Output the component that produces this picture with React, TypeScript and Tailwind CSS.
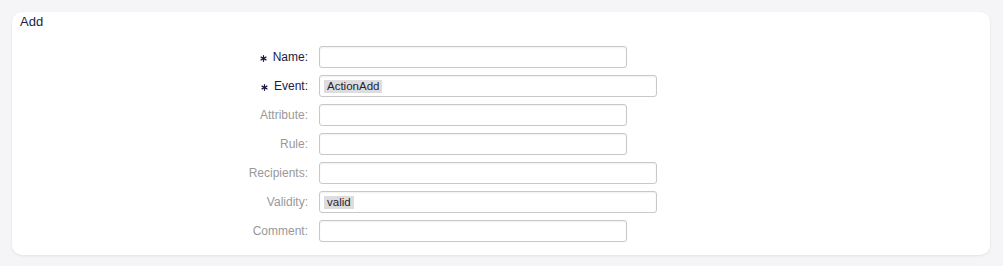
import React from "react";

type Row = { label: string; required?: boolean; long?: boolean; chip?: string };

const rows: Row[] = [
  { label: "Name:", required: true },
  { label: "Event:", required: true, long: true, chip: "ActionAdd" },
  { label: "Attribute:" },
  { label: "Rule:" },
  { label: "Recipients:", long: true },
  { label: "Validity:", long: true, chip: "valid" },
  { label: "Comment:" },
];

function Asterisk() {
  return (
    <svg width="7" height="7" viewBox="0 0 8 8" className="mr-[6px] mt-[2px]">
      <g stroke="#1b1b45" strokeWidth="1.4" strokeLinecap="round">
        <line x1="4" y1="0.8" x2="4" y2="7.2" />
        <line x1="1.2" y1="2.4" x2="6.8" y2="5.6" />
        <line x1="1.2" y1="5.6" x2="6.8" y2="2.4" />
      </g>
    </svg>
  );
}

export default function App() {
  return (
    <div
      className="h-[266px] w-[1003px] bg-[#f5f5f7] pt-[10px] pl-[12px] pr-[13px]"
      style={{ fontFamily: '"Liberation Sans", Arial, sans-serif' }}
    >
      <div className="rounded-[10px] bg-white shadow-[0_1px_3px_rgba(0,0,0,0.08)] pb-[13px]">
        <div className="mt-[2px] h-[20px] pl-[8px] text-[13px] leading-[20px] text-[#1b1b45]">Add</div>
        <div className="mt-[14px] flex flex-col gap-[7px]">
          {rows.map((r) => (
            <div key={r.label} className="flex items-center">
              <div
                className={`flex w-[296px] items-center justify-end text-[12px] leading-[22px] ${
                  r.required ? "text-[#1b1b45]" : "text-[#999999]"
                }`}
              >
                {r.required && <Asterisk />}
                <span>{r.label}</span>
              </div>
              <div
                className={`ml-[11px] flex h-[22px] items-center rounded-[3px] border border-[#c8c8c8] bg-white pl-[4px] shadow-[inset_0_1px_2px_rgba(0,0,0,0.06)] ${
                  r.long ? "w-[338px]" : "w-[308px]"
                }`}
              >
                {r.chip && (
                  <span className="h-[13px] bg-[#dddddd] px-[3px] text-[11.5px] leading-[13px] text-[#1e1e3c]">
                    {r.chip}
                  </span>
                )}
              </div>
            </div>
          ))}
        </div>
      </div>
    </div>
  );
}
